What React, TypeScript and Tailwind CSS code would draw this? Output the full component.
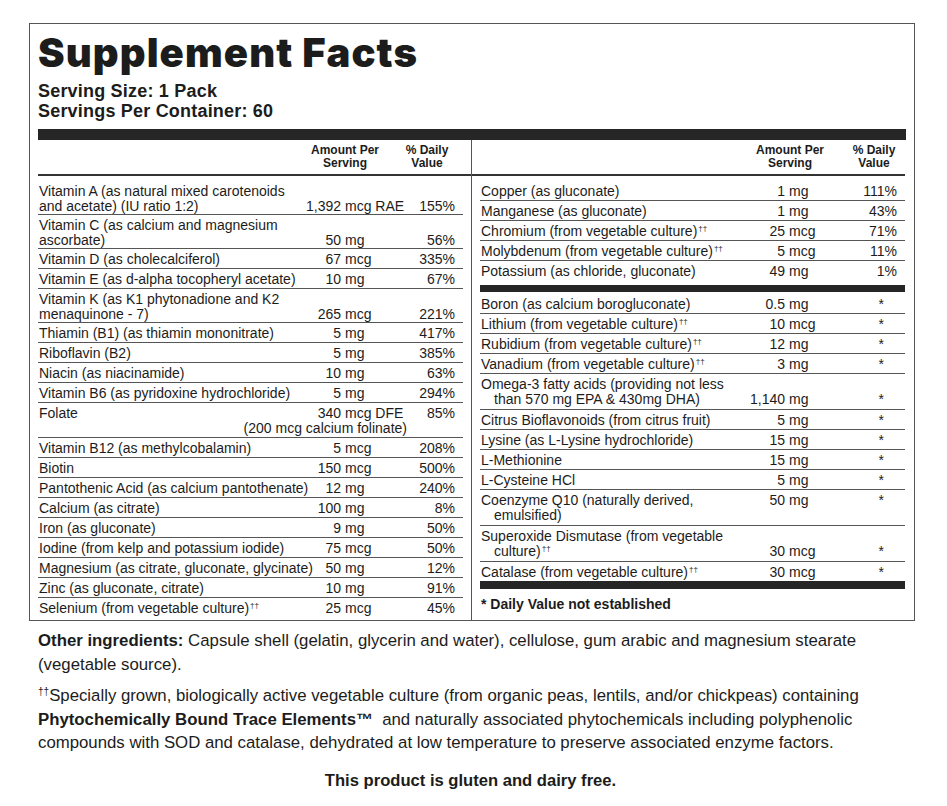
import React from 'react';

type Row = {
  name: string[];
  dag?: boolean;
  num?: string;
  unit?: string;
  dv: string;
  top?: boolean;
  sub?: string;
};

const leftRows: Row[] = [
  { name: ['Vitamin A (as natural mixed carotenoids', 'and acetate) (IU ratio 1:2)'], num: '1,392', unit: 'mcg RAE', dv: '155%' },
  { name: ['Vitamin C (as calcium and magnesium', 'ascorbate)'], num: '50', unit: 'mg', dv: '56%' },
  { name: ['Vitamin D (as cholecalciferol)'], num: '67', unit: 'mcg', dv: '335%' },
  { name: ['Vitamin E (as d-alpha tocopheryl acetate)'], num: '10', unit: 'mg', dv: '67%' },
  { name: ['Vitamin K (as K1 phytonadione and K2', 'menaquinone - 7)'], num: '265', unit: 'mcg', dv: '221%' },
  { name: ['Thiamin (B1) (as thiamin mononitrate)'], num: '5', unit: 'mg', dv: '417%' },
  { name: ['Riboflavin (B2)'], num: '5', unit: 'mg', dv: '385%' },
  { name: ['Niacin (as niacinamide)'], num: '10', unit: 'mg', dv: '63%' },
  { name: ['Vitamin B6 (as pyridoxine hydrochloride)'], num: '5', unit: 'mg', dv: '294%' },
  { name: ['Folate'], num: '340', unit: 'mcg DFE', dv: '85%', sub: '(200 mcg calcium folinate)' },
  { name: ['Vitamin B12 (as methylcobalamin)'], num: '5', unit: 'mcg', dv: '208%' },
  { name: ['Biotin'], num: '150', unit: 'mcg', dv: '500%' },
  { name: ['Pantothenic Acid (as calcium pantothenate)'], num: '12', unit: 'mg', dv: '240%' },
  { name: ['Calcium (as citrate)'], num: '100', unit: 'mg', dv: '8%' },
  { name: ['Iron (as gluconate)'], num: '9', unit: 'mg', dv: '50%' },
  { name: ['Iodine (from kelp and potassium iodide)'], num: '75', unit: 'mcg', dv: '50%' },
  { name: ['Magnesium (as citrate, gluconate, glycinate)'], num: '50', unit: 'mg', dv: '12%' },
  { name: ['Zinc (as gluconate, citrate)'], num: '10', unit: 'mg', dv: '91%' },
  { name: ['Selenium (from vegetable culture)'], dag: true, num: '25', unit: 'mcg', dv: '45%' },
];

const minerals: Row[] = [
  { name: ['Copper (as gluconate)'], num: '1', unit: 'mg', dv: '111%' },
  { name: ['Manganese (as gluconate)'], num: '1', unit: 'mg', dv: '43%' },
  { name: ['Chromium (from vegetable culture)'], dag: true, num: '25', unit: 'mcg', dv: '71%' },
  { name: ['Molybdenum (from vegetable culture)'], dag: true, num: '5', unit: 'mcg', dv: '11%' },
  { name: ['Potassium (as chloride, gluconate)'], num: '49', unit: 'mg', dv: '1%' },
];

const others: Row[] = [
  { name: ['Boron (as calcium borogluconate)'], num: '0.5', unit: 'mg', dv: '*' },
  { name: ['Lithium (from vegetable culture)'], dag: true, num: '10', unit: 'mcg', dv: '*' },
  { name: ['Rubidium (from vegetable culture)'], dag: true, num: '12', unit: 'mg', dv: '*' },
  { name: ['Vanadium (from vegetable culture)'], dag: true, num: '3', unit: 'mg', dv: '*' },
  { name: ['Omega-3 fatty acids (providing not less', 'than 570 mg EPA & 430mg DHA)'], num: '1,140', unit: 'mg', dv: '*' },
  { name: ['Citrus Bioflavonoids (from citrus fruit)'], num: '5', unit: 'mg', dv: '*' },
  { name: ['Lysine (as L-Lysine hydrochloride)'], num: '15', unit: 'mg', dv: '*' },
  { name: ['L-Methionine'], num: '15', unit: 'mg', dv: '*' },
  { name: ['L-Cysteine HCl'], num: '5', unit: 'mg', dv: '*' },
  { name: ['Coenzyme Q10 (naturally derived,', 'emulsified)'], num: '50', unit: 'mg', dv: '*', top: true },
  { name: ['Superoxide Dismutase (from vegetable', 'culture)'], dag: true, num: '30', unit: 'mcg', dv: '*' },
  { name: ['Catalase (from vegetable culture)'], dag: true, num: '30', unit: 'mcg', dv: '*' },
];

const Dag = () => <span className="relative -top-[5px] text-[8px] leading-none ml-[1px]">††</span>;

function FactRow({ row, right, first, lead, last }: { row: Row; right?: boolean; first?: boolean; lead?: boolean; last?: boolean }) {
  const multi = row.name.length > 1;
  const pad = first ? 'pt-[8px]' : lead ? 'pt-[5px]' : 'pt-[3px]';
  const pb = multi ? (right ? 'pb-[2px]' : 'pb-0') : 'pb-[1px]';
  return (
    <div className={`${last ? '' : 'border-b border-[#555]'} ${pad} ${pb} leading-[15px]`}>
      <div className={`flex ${row.top || row.sub ? 'items-start' : 'items-end'}`}>
        <div className="flex-1 min-w-0 whitespace-nowrap pl-[1px]">
          {row.name.map((line, i) => (
            <div key={i} className={right && i > 0 ? 'pl-[13px]' : ''}>
              {line}
              {row.dag && i === row.name.length - 1 && <Dag />}
            </div>
          ))}
        </div>
        <div className={`${right ? 'w-[104px]' : 'w-[106px]'} flex shrink-0 whitespace-nowrap`}>
          <span className="w-[42px] text-right">{row.num}</span>
          <span className="pl-[4px]">{row.unit}</span>
        </div>
        <div className="w-[58px] shrink-0 text-right pr-[8px]">
          {row.dv === '*' ? <span className="mr-[13px]">*</span> : row.dv}
        </div>
      </div>
      {row.sub && <div className="text-right pr-[56px] whitespace-nowrap">{row.sub}</div>}
    </div>
  );
}

function ColHeader({ right }: { right?: boolean }) {
  return (
    <div className="flex border-b-2 border-[#333] pt-[4px] pb-[4px] text-[12px] font-bold leading-[13px]">
      <div className="flex-1" />
      <div className="w-[90px] text-center">Amount Per<br />Serving</div>
      <div className={`w-[62px] text-center ${right ? 'ml-[8px]' : 'ml-[6px] mr-[13px]'}`}>% Daily<br />Value</div>
    </div>
  );
}

export default function App() {
  return (
    <div className="w-[947px] h-[806px] bg-white text-[#1c1c1c] font-['Liberation_Sans',Arial,sans-serif]">
      <div className="pt-[23px] pl-[29px]">
        <div className="w-[886px] h-[598px] border border-[#555] px-[8px] pt-[9px] flex flex-col">
          <h1 className="shrink-0 font-['Inter',sans-serif] font-black text-[40px] leading-[40px] tracking-[1.1px]">Supplement Facts</h1>
          <div className="shrink-0 mt-[8px] text-[18px] font-bold leading-[20px] tracking-[0.2px]">
            <div>Serving Size: 1 Pack</div>
            <div>Servings Per Container: 60</div>
          </div>
          <div className="shrink-0 mt-[8px] h-[11px] bg-[#262626]" />
          <div className="flex flex-1 min-h-0 text-[14px]">
            <div className="w-[434px] border-r border-[#555]">
              <ColHeader />
              <div className="pr-[8px]">
                {leftRows.map((r, i) => (
                  <FactRow key={i} row={r} first={i === 0} last={i === leftRows.length - 1} />
                ))}
              </div>
            </div>
            <div className="w-[433px]">
              <ColHeader right />
              <div className="pl-[8px]">
                {minerals.map((r, i) => (
                  <FactRow key={i} row={r} right first={i === 0} last={i === minerals.length - 1} />
                ))}
                <div className="mt-[5px] h-[7px] bg-[#262626]" />
                {others.map((r, i) => (
                  <FactRow key={i} row={r} right lead={i === 0} last={i === others.length - 1} />
                ))}
                <div className="h-[8px] bg-[#262626]" />
                <div className="pt-[8px] pl-[1px] font-bold leading-[15px]">* Daily Value not established</div>
              </div>
            </div>
          </div>
        </div>
      </div>
      <div className="pl-[38px] pt-[8px] text-[16.8px] leading-[23.5px]">
        <p>
          <b>Other ingredients:</b> Capsule shell (gelatin, glycerin and water), cellulose, gum arabic and magnesium stearate
          <br />(vegetable source).
        </p>
        <p className="mt-[8px]">
          <span className="relative -top-[6px] text-[10px] leading-none">††</span>Specially grown, biologically active vegetable culture (from organic peas, lentils, and/or chickpeas) containing
          <br /><b>Phytochemically Bound Trace Elements™</b>&nbsp; and naturally associated phytochemicals including polyphenolic
          <br />compounds with SOD and catalase, dehydrated at low temperature to preserve associated enzyme factors.
        </p>
        <p className="mt-[14px] text-center font-bold text-[16.6px] pr-[44px]">This product is gluten and dairy free.</p>
      </div>
    </div>
  );
}
